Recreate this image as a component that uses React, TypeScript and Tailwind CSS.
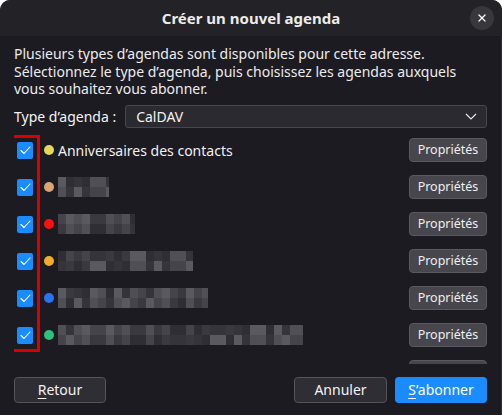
import { X } from 'lucide-react'

const rows = [
  { color: '#e6d95a', name: 'Anniversaires des contacts', blur: 0 },
  { color: '#d9a476', name: '', blur: 51 },
  { color: '#ff1010', name: '', blur: 77 },
  { color: '#f7ab2a', name: '', blur: 135 },
  { color: '#2a72f2', name: '', blur: 150 },
  { color: '#2ec27e', name: '', blur: 245 },
  { color: '#9a9a9a', name: '', blur: 0 },
]

// pixelated placeholder for a hidden name
function Pixelated({ width, seed }: { width: number; seed: number }) {
  const cols = Math.ceil(width / 8)
  const shades = ['#2f2e35', '#3a393f', '#45444a', '#504f55', '#5a595f', '#35343a']
  const cell = (r: number, c: number) => shades[(c * 7 + r * 5 + seed * 3 + ((c * c + seed) % 5)) % shades.length]
  return (
    <div className="flex flex-col overflow-hidden" style={{ width }}>
      {[0, 1].map(r => (
        <div key={r} className="flex h-[10px]">
          {Array.from({ length: cols }).map((_, c) => (
            <div key={c} className="h-full w-[8px] shrink-0" style={{ background: cell(r, c) }} />
          ))}
        </div>
      ))}
    </div>
  )
}

function Check() {
  return (
    <div className="grid h-[17px] w-[16px] place-items-center rounded-[2px] bg-[#1a8cff]">
      <svg width="11" height="9" viewBox="0 0 11 9" fill="none">
        <path d="M1 4.5 L4 7.5 L10 1" stroke="white" strokeWidth="1.1" strokeLinecap="round" strokeLinejoin="round" />
      </svg>
    </div>
  )
}

export default function App() {
  return (
    <div
      className="flex h-[415px] w-[502px] flex-col overflow-hidden rounded-t-[10px] bg-[#1c1b21] text-[#f3f3f5]"
      style={{ fontFamily: '"Noto Sans", "Open Sans", sans-serif' }}
    >
      <div className="relative flex h-[36px] shrink-0 items-center justify-center bg-[#232227]">
        <span className="text-[15px] font-bold text-[#ececec]">Créer un nouvel agenda</span>
        <button className="absolute right-[8px] top-[6px] grid h-[24px] w-[24px] place-items-center rounded-full bg-[#38373c] text-white">
          <X size={12} strokeWidth={2.5} />
        </button>
      </div>

      <div className="flex flex-1 flex-col border-r border-[#2e2d33] px-[14px]">
        <p className="mt-[9px] text-[14px] leading-[17.5px] text-[#ececee]">
          Plusieurs types d’agendas sont disponibles pour cette adresse.
          <br />
          Sélectionnez le type d’agenda, puis choisissez les agendas auxquels
          <br />
          vous souhaitez vous abonner.
        </p>

        <div className="mt-[7px] flex items-center gap-[9px]">
          <span className="whitespace-nowrap text-[14px]">Type d’agenda :</span>
          <div className="flex h-[23px] flex-1 items-center justify-between rounded-[3px] border border-[#48474d] bg-[#2b2a30] pl-[10px] pr-[9px]">
            <span className="text-[14px]">CalDAV</span>
            <svg width="12" height="7" viewBox="0 0 12 7" fill="none">
              <path d="M1 1 L6 6 L11 1" stroke="#e8e8e8" strokeWidth="1.2" />
            </svg>
          </div>
        </div>

        <div className="relative mt-[4px] h-[232px] shrink-0 overflow-hidden">
          {rows.map((row, i) => (
            <div key={i} className="flex h-[37px] items-center">
              <div className="ml-[3px]">
                <Check />
              </div>
              <span className="ml-[11px] h-[10px] w-[10px] shrink-0 rounded-full" style={{ background: row.color }} />
              <div className="ml-[4px] flex-1">
                {row.name ? (
                  <span className="text-[14px] text-[#f0f0f2]">{row.name}</span>
                ) : row.blur > 0 ? (
                  <Pixelated width={row.blur} seed={i} />
                ) : null}
              </div>
              <button className="h-[24px] w-[78px] shrink-0 rounded-[4px] border border-[#5a595f] bg-[#47464c] text-[12.5px] text-[#efefef]">
                Propriétés
              </button>
            </div>
          ))}
          <div className="absolute left-[-4px] top-[3px] h-[217px] w-[30px] border-[3px] border-[#d80000]" />
        </div>

        <div className="mt-[13px] flex items-center">
          <button className="h-[26px] w-[92px] rounded-[4px] border border-[#55545a] bg-[#2f2e34] text-[14px]">
            <span className="underline underline-offset-[3px]">R</span>etour
          </button>
          <div className="flex-1" />
          <button className="h-[26px] w-[93px] rounded-[4px] border border-[#55545a] bg-[#2f2e34] text-[14px]">
            Annuler
          </button>
          <button className="ml-[8px] h-[26px] w-[92px] rounded-[4px] bg-[#1a8cff] text-[14px] text-white">
            <span className="underline underline-offset-[3px]">S</span>’abonner
          </button>
        </div>
      </div>
    </div>
  )
}
